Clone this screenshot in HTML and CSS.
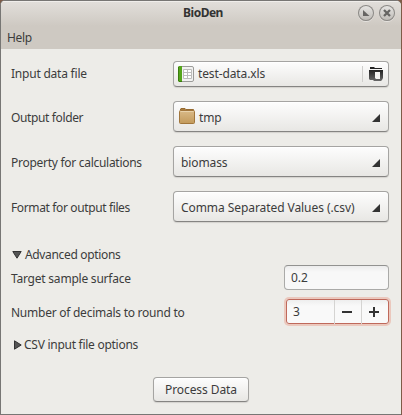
FILE: index.html
```
<!DOCTYPE html>
<html lang="en">
<head>
<meta charset="utf-8">
<title>BioDen</title>
<link rel="stylesheet" href="styles.css">
</head>
<body>
<div class="window">
  <header class="titlebar">
    <span class="title">BioDen</span>
    <div class="controls">
      <span class="control"><svg width="16" height="16" viewBox="0 0 16 16"><path d="M5 5v6h6.500z" fill="#666563"/></svg></span>
      <span class="control"><svg width="16" height="16" viewBox="0 0 16 16"><path d="M5 5l6 6M11 5l-6 6" stroke="#666563" stroke-width="2.3"/></svg></span>
    </div>
  </header>
  <nav class="menubar"><span class="menu">Help</span></nav>
  <main class="content">
    <div class="row file-row">
      <span class="label l-input">Input data file</span>
      <div class="button chooser">
        <svg class="sheet" width="16" height="16" viewBox="0 0 16 16"><rect x=".5" y=".5" width="15" height="15" rx="1.5" fill="#f2f2f1" stroke="#9b9b99"/><path d="M1 0h3v16H1L0 15V1z" fill="#55a51c"/><path d="M.5 1v14M1 15.500h3" stroke="#3b7d0e" fill="none"/><path d="M5.500 3.500h8v9h-8zM5.500 6.500h8M5.500 9.500h8M9.500 3.500v9" stroke="#bdbdbb" fill="#fff"/></svg>
        <span class="t-xls">test-data.xls</span>
        <i class="separator"></i>
        <svg class="browse" width="14" height="14" viewBox="0 0 14 14"><defs><linearGradient id="ink" x2="0" y2="1"><stop stop-color="#222"/><stop offset="1" stop-color="#686868"/></linearGradient></defs><path d="M1 0h4l1 1h7v1H1z" fill="#222"/><path d="M0 3h14v8l-1 2-1 1H5l-1-1H1l-1-1z" fill="url(#ink)"/><path d="M6 5h5v7H7l-1-1z" fill="#f4f3f2"/></svg>
      </div>
    </div>
    <div class="row">
      <span class="label l-output">Output folder</span>
      <div class="button combo folder-combo">
        <svg class="folder" width="16" height="16" viewBox="0 0 16 16"><defs><linearGradient id="tan" x2="0" y2="1"><stop stop-color="#d9ba88"/><stop offset="1" stop-color="#c39a5b"/></linearGradient></defs><path d="M1.500 2.500V1l.5-.5h4l1 1h7.500v2" fill="#a87c40" stroke="#976b31"/><rect x=".5" y="2.500" width="15" height="13" rx="1" fill="url(#tan)" stroke="#a1763c"/><path d="M1.500 3.500h13" stroke="#e8d2ab"/></svg>
        <span class="t-tmp">tmp</span><i class="corner"></i>
      </div>
    </div>
    <div class="row">
      <span class="label l-property">Property for calculations</span>
      <div class="button combo"><span class="t-biomass">biomass</span><i class="corner"></i></div>
    </div>
    <div class="row">
      <span class="label l-format">Format for output files</span>
      <div class="button combo"><span class="t-csv">Comma Separated Values (.csv)</span><i class="corner"></i></div>
    </div>
    <div class="expander advanced">
      <svg width="10" height="8" viewBox="0 0 10 8"><path d="M.8.5h8.400L5 7.200z" fill="#555" stroke="#333"/></svg>
      <span class="l-advanced">Advanced options</span>
    </div>
    <div class="row target-row">
      <span class="label l-target">Target sample surface</span>
      <div class="entry">0.2</div>
    </div>
    <div class="row number-row">
      <span class="label l-number">Number of decimals to round to</span>
      <div class="spin">
        <span class="value">3</span>
        <span class="step"><svg width="10" height="10" viewBox="0 0 10 10"><path d="M0 5h10" stroke="#333" stroke-width="2"/></svg></span>
        <span class="step"><svg width="10" height="10" viewBox="0 0 10 10"><path d="M0 5h10M5 0v10" stroke="#333" stroke-width="2"/></svg></span>
      </div>
    </div>
    <div class="expander csv">
      <svg width="8" height="10" viewBox="0 0 8 10"><path d="M.5.8v8.400L7.200 5z" fill="#555" stroke="#333"/></svg>
      <span class="l-csv">CSV input file options</span>
    </div>
    <div class="button process"><span class="t-process">Process Data</span></div>
  </main>
</div>
</body>
</html>
```
FILE: styles.css
```
* { box-sizing: border-box; }
html { background: #7e5b47; }
body { margin: 0; font: 12px/16px "Noto Sans", sans-serif; color: #3c3c3c; white-space: nowrap; }
svg { display: block; flex: none; }
.window {
  width: 401px; height: 415px; overflow: hidden;
  border: 1px solid #777674; border-right: 0;
  border-radius: 5px 5px 0 0; background: #edece8;
}
.titlebar {
  height: 25px; display: grid; grid-template-columns: 80px 1fr 80px; align-items: center;
  background: linear-gradient(#e2dfdb, #cec9c2); box-shadow: inset 0 1px #f0eeeb;
}
.title { grid-column: 2; padding: 0 0 2px 4px; text-align: center; font-weight: 700; letter-spacing: -.5px; color: #333; }
.controls { display: flex; gap: 5px; justify-content: flex-end; padding: 0 6px 1px 0; }
.control {
  width: 16px; height: 16px; border-radius: 50%;
  background: linear-gradient(#e8e7e5, #bcb9b4); box-shadow: inset 0 0 0 1px #8b8985, 0 1px #e5e2df;
}
.menubar { height: 23px; padding: 4px 6px; letter-spacing: -.3px; background: #cec9c2; }
.content { padding: 12px 12px 0 10px; }
.row { display: flex; align-items: center; justify-content: space-between; height: 31px; margin-bottom: 14px; }
.label { padding-top: 2px; }
.l-input { padding-top: 0; letter-spacing: -.22px; }
.l-output { letter-spacing: -.37px; }
.l-property { letter-spacing: -.28px; }
.l-format { letter-spacing: -.37px; }
.l-advanced { letter-spacing: -.34px; }
.l-target { letter-spacing: -.22px; }
.l-number { letter-spacing: -.25px; }
.l-csv { letter-spacing: -.27px; }
.t-xls { letter-spacing: -.12px; }
.t-tmp { padding-top: 2px; letter-spacing: -.2px; }
.t-biomass { padding-top: 2px; letter-spacing: -.1px; }
.t-csv { padding-top: 2px; letter-spacing: -.07px; }
.t-process { padding-top: 1px; letter-spacing: -.08px; }
.file-row { height: 26px; }
.button {
  display: flex; align-items: center; border: 1px solid #a5a4a2; border-bottom-color: #858482;
  border-radius: 4px; background: linear-gradient(#fdfdfd, #e8e7e4);
  box-shadow: inset 0 1px #fff, 0 1px 1px #d3d2ce;
}
.chooser { width: 216px; height: 26px; padding: 0 5px 0 4px; }
.sheet { margin-right: 4px; }
.separator { width: 1px; height: 16px; margin-left: auto; background: #cfcecc; }
.browse { margin-left: 6px; }
.combo { width: 216px; height: 31px; padding: 0 8px 0 7px; }
.folder-combo { padding-left: 5px; }
.folder { margin: -1px 4px 0 0; }
.corner { width: 8px; height: 8px; margin: 3px 0 0 auto; background: #333; clip-path: polygon(100% 0, 100% 100%, 0 100%); }
.expander { display: flex; align-items: center; height: 16px; }
.advanced { gap: 3px; margin-top: 25px; padding-left: 1px; }
.target-row { height: 25px; margin: 2px 0 9px; }
.entry {
  width: 105px; height: 25px; padding: 4px 6px; border: 1px solid #aaaaa8; border-top-color: #929290;
  border-radius: 4px; background: linear-gradient(#ececec, #f8f8f8 6px);
}
.number-row { height: 25px; margin-bottom: 13px; }
.spin {
  display: grid; grid-template-columns: 47px 27px 1fr; width: 103px; height: 25px;
  border: 1px solid #bf695b; border-radius: 3px; background: linear-gradient(#eee, #f9f9f9 6px);
  box-shadow: 0 0 0 2px #ebc8bd;
}
.value { padding: 4px 6px; }
.step { display: grid; place-items: center; padding-right: 2px; border-left: 1px solid #d5d4d2; }
.csv { gap: 2px; padding-left: 3px; }
.process { width: 96px; height: 25px; margin: 24px 0 0 142px; justify-content: center; }
```
